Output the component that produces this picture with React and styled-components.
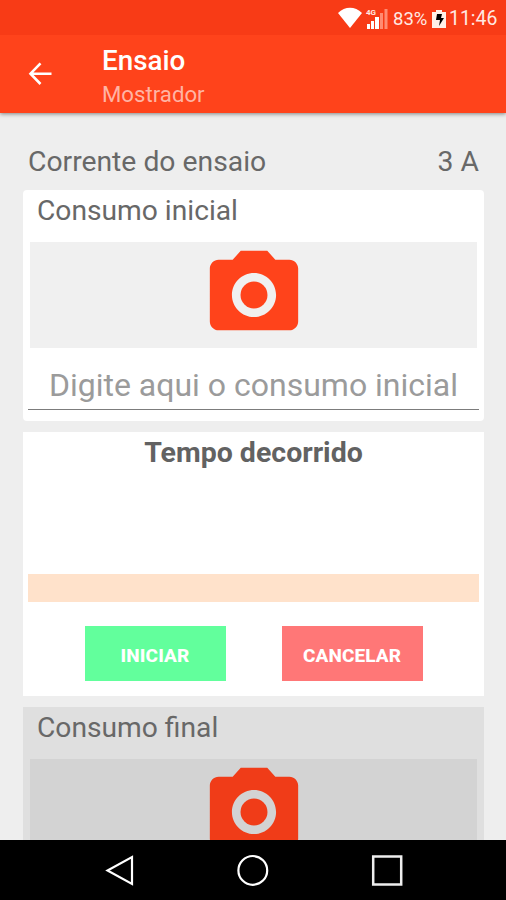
import React from "react";
import styled, { createGlobalStyle } from "styled-components";

const GlobalStyle = createGlobalStyle`
  * {
    box-sizing: border-box;
    margin: 0;
    padding: 0;
  }
  body {
    background: #eee;
    font-family: Roboto, sans-serif;
    overflow: hidden;
  }
`;

const Screen = styled.div`
  display: flex;
  flex-direction: column;
  width: 506px;
  height: 900px;
  background: #eeeeee;
  overflow: hidden;
`;

const StatusBar = styled.div`
  display: flex;
  flex: none;
  align-items: center;
  justify-content: flex-end;
  height: 35px;
  padding: 2px 7px 0 0;
  background: #f83b16;
  color: #ffe9e3;
  font-size: 19.4px;
  line-height: 34px;
  z-index: 2;
  svg {
    flex: none;
  }
`;

const Battery = styled.span`
  width: 35px;
  margin: 0 4px 0 4px;
  font-size: 18.5px;
  white-space: nowrap;
`;

const Clock = styled.span`
  width: 50px;
  margin-left: 3px;
  white-space: nowrap;
`;

const Toolbar = styled.header`
  display: flex;
  flex: none;
  align-items: center;
  height: 78px;
  padding-left: 26px;
  background: #ff431b;
  box-shadow: 0 1px 4px rgba(0, 0, 0, 0.45);
  z-index: 1;
  .titles {
    margin-left: 48px;
    padding-top: 7px;
  }
  h1 {
    color: #fff;
    font-size: 27.8px;
    font-weight: 500;
    line-height: 34px;
  }
  p {
    color: #ffb4a4;
    font-size: 22.2px;
    line-height: 33px;
  }
`;

const Content = styled.main`
  flex: 1;
  min-height: 0;
  padding: 29px 22px 0 23px;
  overflow: hidden;
`;

const Current = styled.div`
  display: flex;
  justify-content: space-between;
  height: 48px;
  padding: 0 5px 0 5px;
  color: #686868;
  font-size: 28.3px;
  line-height: 40px;
`;

const Card = styled.section`
  height: ${({ $height }) => $height}px;
  margin-bottom: 11px;
  padding: 0 5px;
  background: ${({ $disabled }) => ($disabled ? "#dfdfdf" : "#fff")};
  border-radius: ${({ $radius }) => $radius || 0}px;
`;

const CardTitle = styled.h2`
  height: 52px;
  padding-left: 9px;
  color: #686868;
  font-size: 28.2px;
  font-weight: 400;
  line-height: 42px;
`;

const Photo = styled.button`
  display: flex;
  justify-content: center;
  width: 447px;
  height: 106px;
  margin-left: 2px;
  border: none;
  background: ${({ $disabled }) => ($disabled ? "#d3d3d3" : "#f0f0f0")};
  color: ${({ $disabled }) => ($disabled ? "#f03c18" : "#ff431b")};
`;

const Field = styled.input`
  display: block;
  width: 451px;
  height: 62px;
  padding-top: 13px;
  border: none;
  border-bottom: 1.5px solid #7c7c7c;
  background: transparent;
  font-family: inherit;
  font-size: 32px;
  text-align: center;
  outline: none;
  &::placeholder {
    color: #9b9b9b;
  }
`;

const TimerTitle = styled.h2`
  height: 142px;
  color: #626262;
  font-size: 28.5px;
  font-weight: 700;
  line-height: 42px;
  text-align: center;
`;

const Progress = styled.div`
  height: 28px;
  background: #ffe2cb;
`;

const Actions = styled.div`
  display: flex;
  justify-content: center;
  gap: 56px;
  margin-top: 24px;
`;

const Action = styled.button`
  width: 141px;
  height: 55px;
  padding-top: 3px;
  border: none;
  background: ${({ $color }) => $color};
  color: #fff;
  font-family: inherit;
  font-size: 19px;
  font-weight: 800;
  letter-spacing: 0.1px;
`;

const NavBar = styled.nav`
  display: flex;
  flex: none;
  align-items: center;
  justify-content: center;
  gap: 102px;
  height: 60px;
  background: #000;
`;

const CameraIcon = () => (
  <svg width="106" height="106" viewBox="0 0 24 24" fill="currentColor">
    <circle cx="12" cy="12" r="3.05" />
    <path d="M9 2 7.17 4H4c-1.1 0-2 .9-2 2v12c0 1.1.9 2 2 2h16c1.1 0 2-.9 2-2V6c0-1.1-.9-2-2-2h-3.17L15 2H9zm3 15c-2.76 0-5-2.24-5-5s2.24-5 5-5 5 2.24 5 5-2.24 5-5 5z" />
  </svg>
);

const StatusIcons = () => (
  <svg width="54" height="24" viewBox="0 0 54 24">
    <path d="M3 6C10-1 20-1 27 6L15 21z" fill="#fff" />
    <text x="31" y="8" fontSize="8" fontWeight="700" fill="#ffe9e3">4G</text>
    <path d="M32 17h3v5h-3zM36 14h3v8h-3zM40 10h4v12h-4z" fill="#fff" />
    <path d="M45 6h3v16h-3zM49.5 2h3v20h-3z" fill="#ff8b72" />
  </svg>
);

const BatteryIcon = () => (
  <svg width="14" height="20" viewBox="0 0 14 20">
    <path d="M4 1h6v2h4v16H0V3h4z" fill="#fff0e8" />
    <path d="M5 5h5L9 9h3l-5 8 1-6H4z" fill="#000" />
  </svg>
);

const App = () => {
  return (
    <Screen>
      <GlobalStyle />
      <StatusBar>
        <StatusIcons />
        <Battery>83%</Battery>
        <BatteryIcon />
        <Clock>11:46</Clock>
      </StatusBar>
      <Toolbar>
        <svg width="28" height="28" viewBox="0 0 28 28" fill="none" stroke="#fff" strokeWidth="2.6">
          <path d="M25.5 13.7H5M14.5 3.4 4.5 13.7l10 10.3" />
        </svg>
        <div className="titles">
          <h1>Ensaio</h1>
          <p>Mostrador</p>
        </div>
      </Toolbar>
      <Content>
        <Current>
          <span>Corrente do ensaio</span>
          <span>3 A</span>
        </Current>
        <Card $height={231} $radius={4}>
          <CardTitle>Consumo inicial</CardTitle>
          <Photo>
            <CameraIcon />
          </Photo>
          <Field placeholder="Digite aqui o consumo inicial" />
        </Card>
        <Card $height={264}>
          <TimerTitle>Tempo decorrido</TimerTitle>
          <Progress />
          <Actions>
            <Action $color="#62ff9c">INICIAR</Action>
            <Action $color="#ff7777">CANCELAR</Action>
          </Actions>
        </Card>
        <Card $height={231} $disabled>
          <CardTitle>Consumo final</CardTitle>
          <Photo $disabled>
            <CameraIcon />
          </Photo>
        </Card>
      </Content>
      <NavBar>
        <svg width="32" height="32" viewBox="0 0 32 32" fill="none" stroke="#fff" strokeWidth="2.2">
          <path d="M29 3v27L4.5 16.5z" />
        </svg>
        <svg width="32" height="32" viewBox="0 0 32 32" fill="none" stroke="#fff" strokeWidth="2.2">
          <circle cx="15.8" cy="16.4" r="14.4" />
        </svg>
        <svg width="32" height="32" viewBox="0 0 32 32" fill="none" stroke="#eee" strokeWidth="2.5">
          <path d="M2.2 2.5h28v28h-28z" />
        </svg>
      </NavBar>
    </Screen>
  );
};

export default App;
